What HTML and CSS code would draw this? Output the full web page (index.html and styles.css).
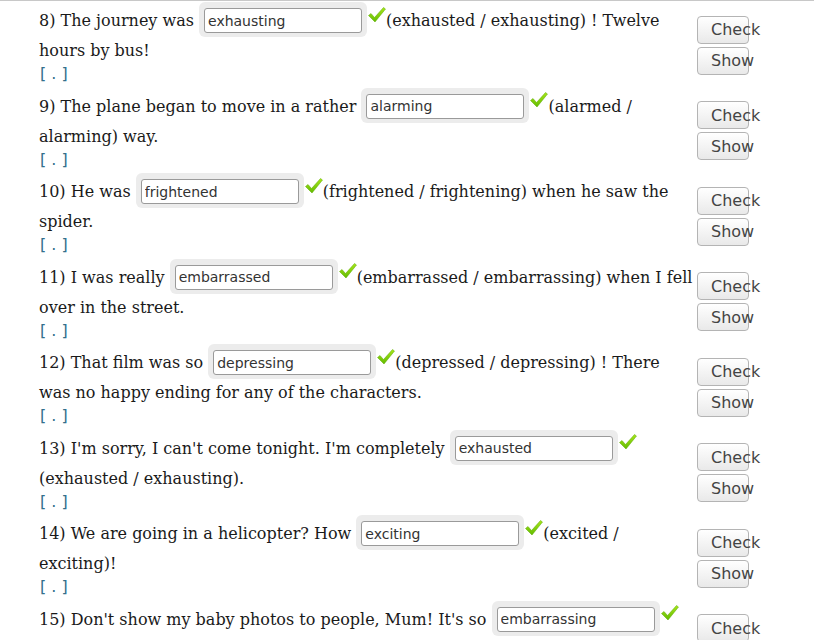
FILE: index.html
```html
<!DOCTYPE html>
<html>
<head>
<meta charset="utf-8">
<link rel="stylesheet" href="styles.css">
</head>
<body>
<svg width="0" height="0" class="defs"><defs><linearGradient id="tg" x1="0" y1="0" x2="0" y2="1"><stop offset="0" stop-color="#a8e61a"/><stop offset="1" stop-color="#62bb00"/></linearGradient></defs></svg>
<div class="sheet">
  <div class="row">
    <div class="q">
      <p class="text">8) The journey was <span class="field"><input type="text" value="exhausting"></span><svg class="tick" viewBox="0 0 18 16" width="18" height="16"><path d="M0.5 8.5 L3 6.5 L6.5 10.5 L15.5 0.5 L17.5 2 L7 15 Z" fill="url(#tg)" stroke="#5aa800" stroke-width="0.5"/></svg>(exhausted / exhausting) ! Twelve hours by bus!</p>
      <div class="hint">[ . ]</div>
    </div>
    <div class="btns"><button class="btn">Check</button><button class="btn">Show</button></div>
  </div>
  <div class="row">
    <div class="q">
      <p class="text">9) The plane began to move in a rather <span class="field"><input type="text" value="alarming"></span><svg class="tick" viewBox="0 0 18 16" width="18" height="16"><path d="M0.5 8.5 L3 6.5 L6.5 10.5 L15.5 0.5 L17.5 2 L7 15 Z" fill="url(#tg)" stroke="#5aa800" stroke-width="0.5"/></svg>(alarmed / alarming) way.</p>
      <div class="hint">[ . ]</div>
    </div>
    <div class="btns"><button class="btn">Check</button><button class="btn">Show</button></div>
  </div>
  <div class="row">
    <div class="q">
      <p class="text">10) He was <span class="field"><input type="text" value="frightened"></span><svg class="tick" viewBox="0 0 18 16" width="18" height="16"><path d="M0.5 8.5 L3 6.5 L6.5 10.5 L15.5 0.5 L17.5 2 L7 15 Z" fill="url(#tg)" stroke="#5aa800" stroke-width="0.5"/></svg>(frightened / frightening) when he saw the spider.</p>
      <div class="hint">[ . ]</div>
    </div>
    <div class="btns"><button class="btn">Check</button><button class="btn">Show</button></div>
  </div>
  <div class="row">
    <div class="q">
      <p class="text">11) I was really <span class="field"><input type="text" value="embarrassed"></span><svg class="tick" viewBox="0 0 18 16" width="18" height="16"><path d="M0.5 8.5 L3 6.5 L6.5 10.5 L15.5 0.5 L17.5 2 L7 15 Z" fill="url(#tg)" stroke="#5aa800" stroke-width="0.5"/></svg>(embarrassed / embarrassing) when I fell over in the street.</p>
      <div class="hint">[ . ]</div>
    </div>
    <div class="btns"><button class="btn">Check</button><button class="btn">Show</button></div>
  </div>
  <div class="row">
    <div class="q">
      <p class="text">12) That film was so <span class="field"><input type="text" value="depressing"></span><svg class="tick" viewBox="0 0 18 16" width="18" height="16"><path d="M0.5 8.5 L3 6.5 L6.5 10.5 L15.5 0.5 L17.5 2 L7 15 Z" fill="url(#tg)" stroke="#5aa800" stroke-width="0.5"/></svg>(depressed / depressing) ! There was no happy ending for any of the characters.</p>
      <div class="hint">[ . ]</div>
    </div>
    <div class="btns"><button class="btn">Check</button><button class="btn">Show</button></div>
  </div>
  <div class="row">
    <div class="q">
      <p class="text">13) I'm sorry, I can't come tonight. I'm completely <span class="field"><input type="text" value="exhausted"></span><svg class="tick" viewBox="0 0 18 16" width="18" height="16"><path d="M0.5 8.5 L3 6.5 L6.5 10.5 L15.5 0.5 L17.5 2 L7 15 Z" fill="url(#tg)" stroke="#5aa800" stroke-width="0.5"/></svg>(exhausted / exhausting).</p>
      <div class="hint">[ . ]</div>
    </div>
    <div class="btns"><button class="btn">Check</button><button class="btn">Show</button></div>
  </div>
  <div class="row">
    <div class="q">
      <p class="text">14) We are going in a helicopter? How <span class="field"><input type="text" value="exciting"></span><svg class="tick" viewBox="0 0 18 16" width="18" height="16"><path d="M0.5 8.5 L3 6.5 L6.5 10.5 L15.5 0.5 L17.5 2 L7 15 Z" fill="url(#tg)" stroke="#5aa800" stroke-width="0.5"/></svg>(excited / exciting)!</p>
      <div class="hint">[ . ]</div>
    </div>
    <div class="btns"><button class="btn">Check</button><button class="btn">Show</button></div>
  </div>
  <div class="row">
    <div class="q">
      <p class="text">15) Don't show my baby photos to people, Mum! It's so <span class="field"><input type="text" value="embarrassing"></span><svg class="tick" viewBox="0 0 18 16" width="18" height="16"><path d="M0.5 8.5 L3 6.5 L6.5 10.5 L15.5 0.5 L17.5 2 L7 15 Z" fill="url(#tg)" stroke="#5aa800" stroke-width="0.5"/></svg>(embarrassed / embarrassing)!</p>
      <div class="hint">[ . ]</div>
    </div>
    <div class="btns"><button class="btn">Check</button><button class="btn">Show</button></div>
  </div>
</div>
</body>
</html>
```

FILE: styles.css
```css
html, body {
  margin: 0;
  padding: 0;
  background: #ffffff;
}

.defs {
  position: absolute;
  width: 0;
  height: 0;
}

.sheet {
  border-top: 1px solid #c8c8c8;
  padding-left: 39px;
}

.row {
  display: grid;
  grid-template-columns: 655px 60px;
  column-gap: 3px;
  align-items: center;
  padding: 1px 0 3.5px;
}

.text {
  margin: 0;
  font-family: "DejaVu Serif", serif;
  font-size: 16px;
  line-height: 27px;
  color: #1a1a1a;
}

.field {
  display: inline-block;
  background: #ececec;
  border-radius: 6px;
  padding: 6px 5px 4px 5px;
}

.field input {
  display: block;
  box-sizing: border-box;
  width: 158px;
  height: 25px;
  margin: 0;
  padding: 0 3px;
  border: 1px solid #9a9a9a;
  border-radius: 3px;
  background: #ffffff;
  font-family: "DejaVu Sans", sans-serif;
  font-size: 14px;
  color: #333333;
}

.tick {
  vertical-align: 3px;
  margin-left: 1px;
}

.hint {
  font-family: "DejaVu Sans", sans-serif;
  font-size: 16px;
  line-height: 18px;
  color: #336f8c;
  padding: 1px 0 0 1px;
}

.btns {
  display: flex;
  flex-direction: column;
  gap: 3px;
  margin-top: 5px;
}

.btn {
  box-sizing: border-box;
  width: 52px;
  height: 28px;
  padding: 0 0 0 13px;
  text-align: left;
  white-space: nowrap;
  overflow: visible;
  border: 1px solid #b4b4b4;
  border-radius: 4px;
  background: linear-gradient(#ffffff, #e9e9e9);
  font-family: "DejaVu Sans", sans-serif;
  font-size: 16px;
  color: #444444;
}
```
